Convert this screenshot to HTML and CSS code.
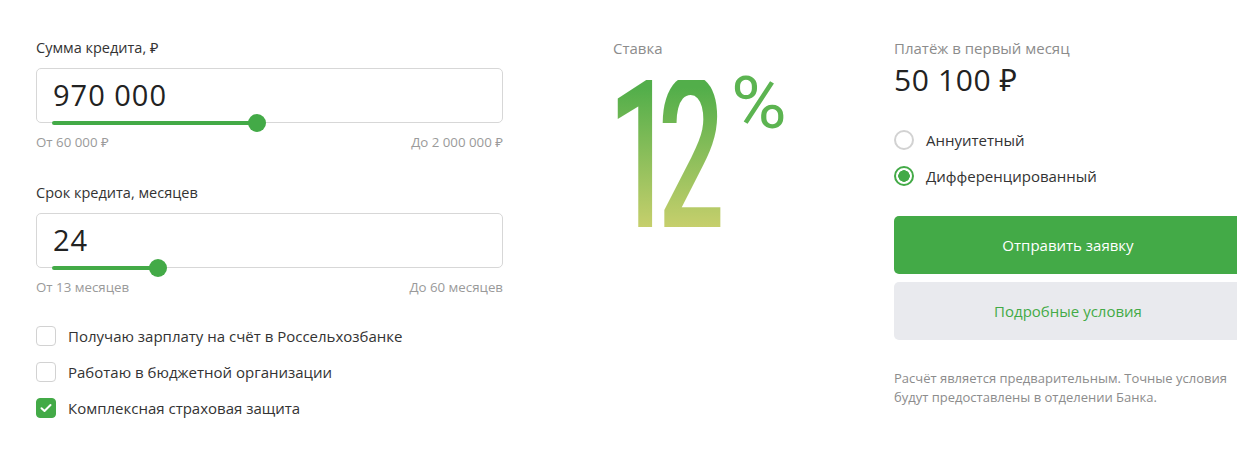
FILE: index.html
```html
<!DOCTYPE html>
<html lang="ru">
<head>
<meta charset="utf-8">
<title>Кредитный калькулятор</title>
<link rel="stylesheet" href="styles.css">
</head>
<body>
<div class="calc">
  <div class="col-left">
    <div class="field">
      <div class="field-label">Сумма кредита, ₽</div>
      <div class="input-box">
        <span class="input-value">970 000</span>
        <div class="slider" style="width: 205px"><span class="thumb"></span></div>
      </div>
      <div class="range"><span>От 60 000 ₽</span><span>До 2 000 000 ₽</span></div>
    </div>
    <div class="field field-second">
      <div class="field-label">Срок кредита, месяцев</div>
      <div class="input-box">
        <span class="input-value">24</span>
        <div class="slider" style="width: 106px"><span class="thumb"></span></div>
      </div>
      <div class="range"><span>От 13 месяцев</span><span>До 60 месяцев</span></div>
    </div>
    <div class="checks">
      <div class="check"><span class="box"></span><span>Получаю зарплату на счёт в Россельхозбанке</span></div>
      <div class="check"><span class="box"></span><span>Работаю в бюджетной организации</span></div>
      <div class="check"><span class="box box-on"><svg width="12" height="10" viewBox="0 0 12 10"><path d="M1.5 5.2 L4.5 8 L10.5 2" fill="none" stroke="#fff" stroke-width="2" stroke-linecap="round" stroke-linejoin="round"/></svg></span><span>Комплексная страховая защита</span></div>
    </div>
  </div>
  <div class="col-mid">
    <div class="muted-label">Ставка</div>
    <div class="rate">
      <span class="rate-num">12</span><span class="rate-pct">%</span>
    </div>
  </div>
  <div class="col-right">
    <div class="muted-label">Платёж в первый месяц</div>
    <div class="payment">50 100 ₽</div>
    <div class="radios">
      <div class="radio"><span class="circle"></span><span>Аннуитетный</span></div>
      <div class="radio"><span class="circle circle-on"></span><span>Дифференцированный</span></div>
    </div>
    <div class="btn btn-primary">Отправить заявку</div>
    <div class="btn btn-secondary">Подробные условия</div>
    <p class="note">Расчёт является предварительным. Точные условия<br>будут предоставлены в отделении Банка.</p>
  </div>
</div>
</body>
</html>
```
FILE: styles.css
```css
html, body {
  margin: 0;
  padding: 0;
  background: #fff;
  overflow: hidden;
}
body {
  font-family: "Open Sans", "Noto Sans", sans-serif;
  color: #333;
  width: 1237px;
  height: 456px;
}
.calc {
  display: flex;
  gap: 110px;
  padding: 38px 0 0 36px;
}
.col-left { width: 467px; flex: none; }
.col-mid { width: 171px; flex: none; }
.col-right { width: 348px; flex: none; }

.field-label {
  font-size: 14.5px;
  line-height: 20px;
  color: #333;
  margin-bottom: 10px;
}
.field-second { margin-top: 32px; }
.input-box {
  position: relative;
  height: 55px;
  box-sizing: border-box;
  border: 1px solid #d7d7d7;
  border-radius: 5px;
  padding-left: 16px;
}
.input-value {
  display: block;
  font-size: 29px;
  line-height: 30px;
  letter-spacing: 1px;
  padding-top: 11px;
  color: #222;
}
.slider {
  position: absolute;
  left: 15px;
  bottom: -3px;
  height: 4px;
  border-radius: 2px;
  background: #43aa47;
}
.thumb {
  position: absolute;
  right: -9px;
  top: -7px;
  width: 18px;
  height: 18px;
  border-radius: 50%;
  background: #43aa47;
}
.range {
  display: flex;
  justify-content: space-between;
  margin-top: 10px;
  font-size: 13.3px;
  line-height: 18px;
  color: #9a9a9a;
}
.checks {
  margin-top: 30px;
  display: flex;
  flex-direction: column;
  gap: 16px;
}
.check, .radio {
  display: flex;
  align-items: center;
  gap: 12px;
  font-size: 15px;
  line-height: 20px;
  color: #333;
}
.box {
  width: 20px;
  height: 20px;
  box-sizing: border-box;
  border: 1px solid #d2d2d2;
  border-radius: 4px;
  display: flex;
  align-items: center;
  justify-content: center;
}
.box-on {
  background: #43aa47;
  border-color: #43aa47;
}
.muted-label {
  font-size: 15px;
  line-height: 20px;
  color: #8c8c8c;
}
.rate {
  display: flex;
  align-items: flex-start;
  height: 160px;
}
.rate-num {
  display: inline-block;
  font-family: Roboto, "Liberation Sans", sans-serif;
  font-weight: 500;
  font-size: 140px;
  line-height: 100px;
  height: 100px;
  letter-spacing: -20px;
  white-space: nowrap;
  background: linear-gradient(#52ae4a 5%, #c6cf6c 98%);
  -webkit-background-clip: text;
  background-clip: text;
  color: transparent;
  transform-origin: 0 0;
  transform: translate(-5px, 22px) scale(0.84, 1.5);
  width: 150px;
  flex: none;
  margin-right: -150px;
}
.rate-pct {
  display: inline-block;
  font-family: Roboto, "Liberation Sans", sans-serif;
  font-size: 73px;
  line-height: 73px;
  color: #5cb451;
  transform-origin: 0 0;
  transform: translate(118px, 9px) scale(1.04, 1);
}
.payment {
  margin-top: 4px;
  font-size: 30px;
  line-height: 36px;
  letter-spacing: 0.6px;
  color: #222;
}
.radios {
  margin-top: 32px;
  display: flex;
  flex-direction: column;
  gap: 16px;
  margin-bottom: 30px;
}
.circle {
  width: 20px;
  height: 20px;
  box-sizing: border-box;
  border: 2px solid #d2d2d2;
  border-radius: 50%;
  flex: none;
}
.circle-on {
  border-color: #43aa47;
  background: radial-gradient(circle, #43aa47 0 5.5px, #fff 6px);
}
.btn {
  height: 58px;
  border-radius: 5px;
  display: flex;
  align-items: center;
  justify-content: center;
  font-size: 15px;
}
.btn-primary {
  background: #43aa47;
  color: #fff;
  margin-bottom: 8px;
}
.btn-secondary {
  background: #e9eaee;
  color: #43aa47;
}
.note {
  margin: 29px 0 0;
  font-size: 13px;
  line-height: 19px;
  color: #8c8c8c;
}
```
